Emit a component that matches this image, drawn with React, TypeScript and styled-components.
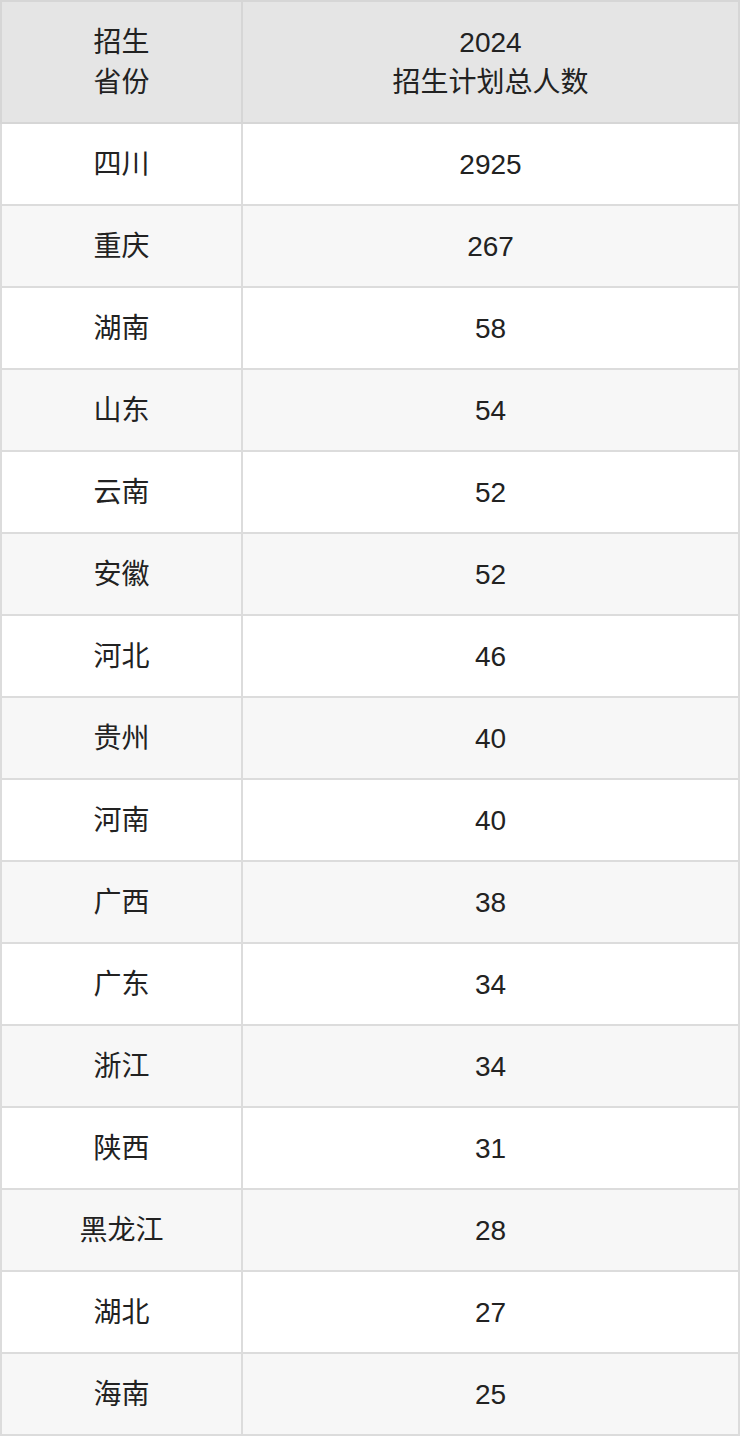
import styled, { createGlobalStyle } from "styled-components";

const GlobalStyle = createGlobalStyle`
  body {
    margin: 0;
    background: #ffffff;
    font-family: "Liberation Sans", "Noto Sans CJK SC", sans-serif;
  }
`;

const Table = styled.table`
  width: 740px;
  border-collapse: collapse;
  table-layout: fixed;
  color: #222222;
  font-size: 28px;
  line-height: 40px;
`;

const HeadCell = styled.th`
  background-color: #e5e5e5;
  border: 2px solid #d6d6d6;
  font-weight: 400;
  height: 80px;
  padding: 21px 10px 19px;
  text-align: center;
  vertical-align: middle;
`;

const Row = styled.tr<{ $striped: boolean }>`
  background-color: ${(p) => (p.$striped ? "#f7f7f7" : "#ffffff")};
`;

const Cell = styled.td`
  border: 2px solid #dcdcdc;
  height: 40px;
  padding: 21px 10px 19px;
  text-align: center;
  vertical-align: middle;
`;

const rows: [string, number][] = [
  ["四川", 2925],
  ["重庆", 267],
  ["湖南", 58],
  ["山东", 54],
  ["云南", 52],
  ["安徽", 52],
  ["河北", 46],
  ["贵州", 40],
  ["河南", 40],
  ["广西", 38],
  ["广东", 34],
  ["浙江", 34],
  ["陕西", 31],
  ["黑龙江", 28],
  ["湖北", 27],
  ["海南", 25],
];

export default function App() {
  return (
    <>
      <GlobalStyle />
      <Table>
        <colgroup>
          <col style={{ width: 241 }} />
          <col />
        </colgroup>
        <thead>
          <tr>
            <HeadCell>
              招生
              <br />
              省份
            </HeadCell>
            <HeadCell>
              2024
              <br />
              招生计划总人数
            </HeadCell>
          </tr>
        </thead>
        <tbody>
          {rows.map(([province, count], i) => (
            <Row key={province} $striped={i % 2 === 1}>
              <Cell>{province}</Cell>
              <Cell>{count}</Cell>
            </Row>
          ))}
        </tbody>
      </Table>
    </>
  );
}
